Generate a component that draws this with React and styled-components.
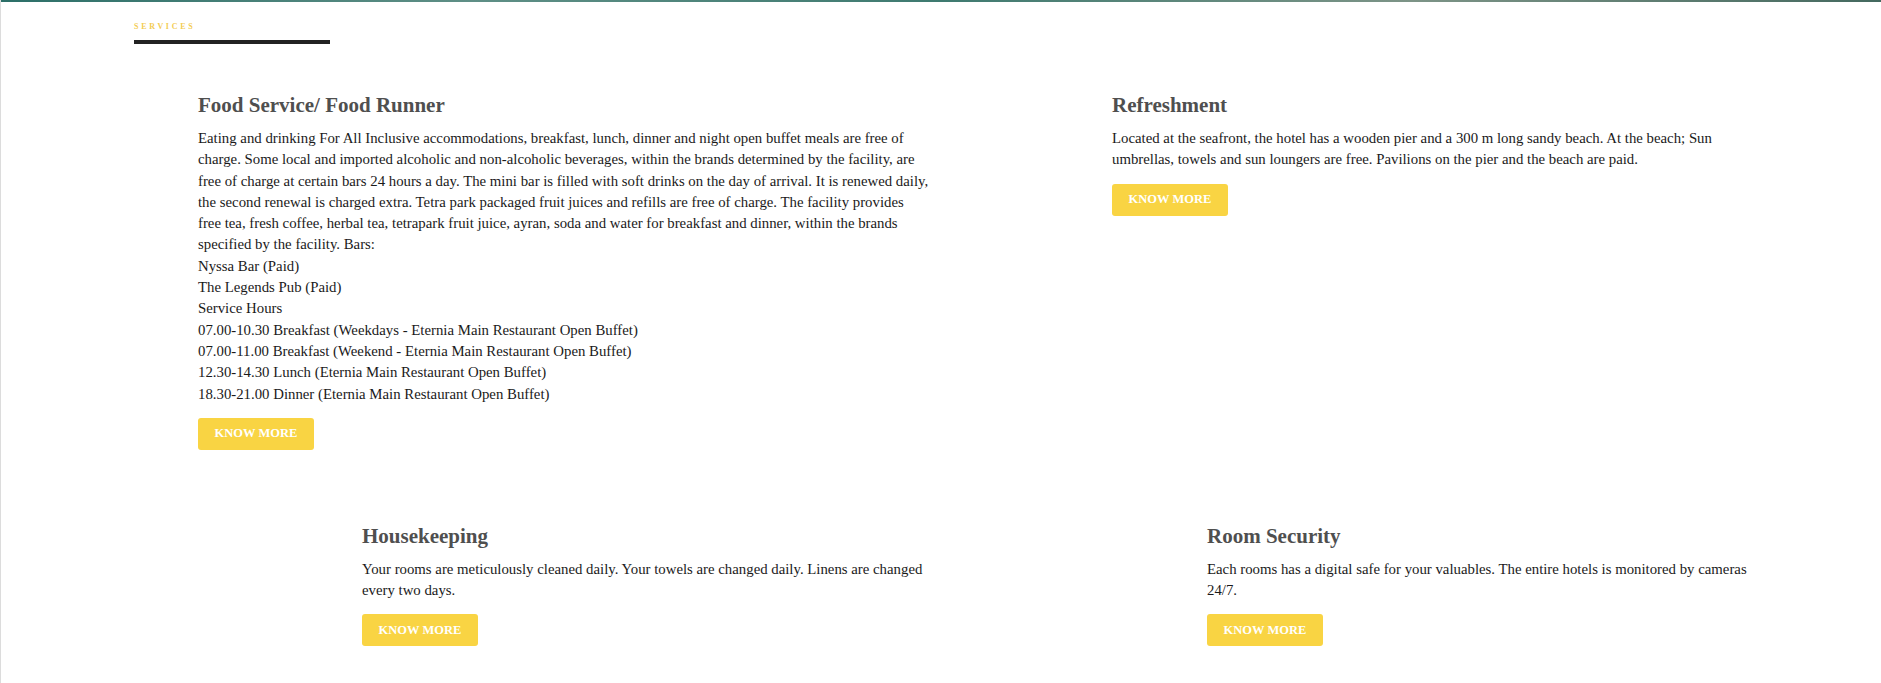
import styled, { createGlobalStyle } from "styled-components";

const GlobalStyle = createGlobalStyle`
  html, body {
    margin: 0;
    padding: 0;
    background: #fff;
  }
  body {
    font-family: "Liberation Serif", "DejaVu Serif", serif;
  }
`;

const Page = styled.div`
  min-height: 683px;
  border-left: 1px solid #dcdcdc;
  box-sizing: border-box;
  background: #fff;
`;

const TopLine = styled.div`
  height: 2px;
  background: linear-gradient(
    90deg,
    #2c6f68 0%,
    #5f8f86 25%,
    #3e7a70 50%,
    #7d9487 75%,
    #44695f 100%
  );
`;

const Header = styled.header`
  padding: 20px 0 0 133px;
`;

const Label = styled.div`
  font-size: 8px;
  line-height: 10px;
  font-weight: 700;
  letter-spacing: 2.7px;
  color: #f3cd55;
  text-transform: uppercase;
`;

const Bar = styled.div`
  width: 196px;
  height: 4px;
  margin-top: 8px;
  background: #222;
`;

const Row = styled.div`
  display: flex;
  align-items: flex-start;
  margin-top: ${(p) => p.$top}px;
`;

const Card = styled.article`
  margin-left: ${(p) => p.$left}px;
  width: ${(p) => p.$width}px;
  flex-shrink: 0;
`;

const Title = styled.h3`
  margin: 0;
  font-size: 21px;
  line-height: 26px;
  font-weight: 700;
  color: #4f4f4f;
`;

const Text = styled.p`
  margin: 10px 0 0;
  font-size: 14.8px;
  line-height: 21.3px;
  color: #1a1a1a;
`;

const Line = styled.span`
  display: block;
  white-space: nowrap;
`;

const Button = styled.button`
  display: inline-flex;
  align-items: center;
  justify-content: center;
  margin-top: 13px;
  height: 32px;
  padding: 0 16px;
  min-width: 116px;
  box-sizing: border-box;
  border: none;
  border-radius: 3px;
  background: #f9d443;
  color: #fff;
  font-family: "Liberation Serif", serif;
  font-size: 12.5px;
  font-weight: 700;
  text-transform: uppercase;
  cursor: pointer;
`;

const Service = ({ title, lines, left, width }) => (
  <Card $left={left} $width={width}>
    <Title>{title}</Title>
    <Text>
      {lines.map((l) => (
        <Line key={l}>{l}</Line>
      ))}
    </Text>
    <Button type="button">Know more</Button>
  </Card>
);

const food = [
  "Eating and drinking For All Inclusive accommodations, breakfast, lunch, dinner and night open buffet meals are free of",
  "charge. Some local and imported alcoholic and non-alcoholic beverages, within the brands determined by the facility, are",
  "free of charge at certain bars 24 hours a day. The mini bar is filled with soft drinks on the day of arrival. It is renewed daily,",
  "the second renewal is charged extra. Tetra park packaged fruit juices and refills are free of charge. The facility provides",
  "free tea, fresh coffee, herbal tea, tetrapark fruit juice, ayran, soda and water for breakfast and dinner, within the brands",
  "specified by the facility. Bars:",
  "Nyssa Bar (Paid)",
  "The Legends Pub (Paid)",
  "Service Hours",
  "07.00-10.30 Breakfast (Weekdays - Eternia Main Restaurant Open Buffet)",
  "07.00-11.00 Breakfast (Weekend - Eternia Main Restaurant Open Buffet)",
  "12.30-14.30 Lunch (Eternia Main Restaurant Open Buffet)",
  "18.30-21.00 Dinner (Eternia Main Restaurant Open Buffet)",
];

const refreshment = [
  "Located at the seafront, the hotel has a wooden pier and a 300 m long sandy beach. At the beach; Sun",
  "umbrellas, towels and sun loungers are free. Pavilions on the pier and the beach are paid.",
];

const housekeeping = [
  "Your rooms are meticulously cleaned daily. Your towels are changed daily. Linens are changed",
  "every two days.",
];

const security = [
  "Each rooms has a digital safe for your valuables. The entire hotels is monitored by cameras",
  "24/7.",
];

export default function App() {
  return (
    <>
      <GlobalStyle />
      <Page>
        <TopLine />
        <Header>
          <Label>Services</Label>
          <Bar />
        </Header>
        <Row $top={48}>
          <Service title="Food Service/ Food Runner" lines={food} left={197} width={760} />
          <Service title="Refreshment" lines={refreshment} left={154} width={640} />
        </Row>
        <Row $top={73}>
          <Service title="Housekeeping" lines={housekeeping} left={361} width={600} />
          <Service title="Room Security" lines={security} left={245} width={580} />
        </Row>
      </Page>
    </>
  );
}
